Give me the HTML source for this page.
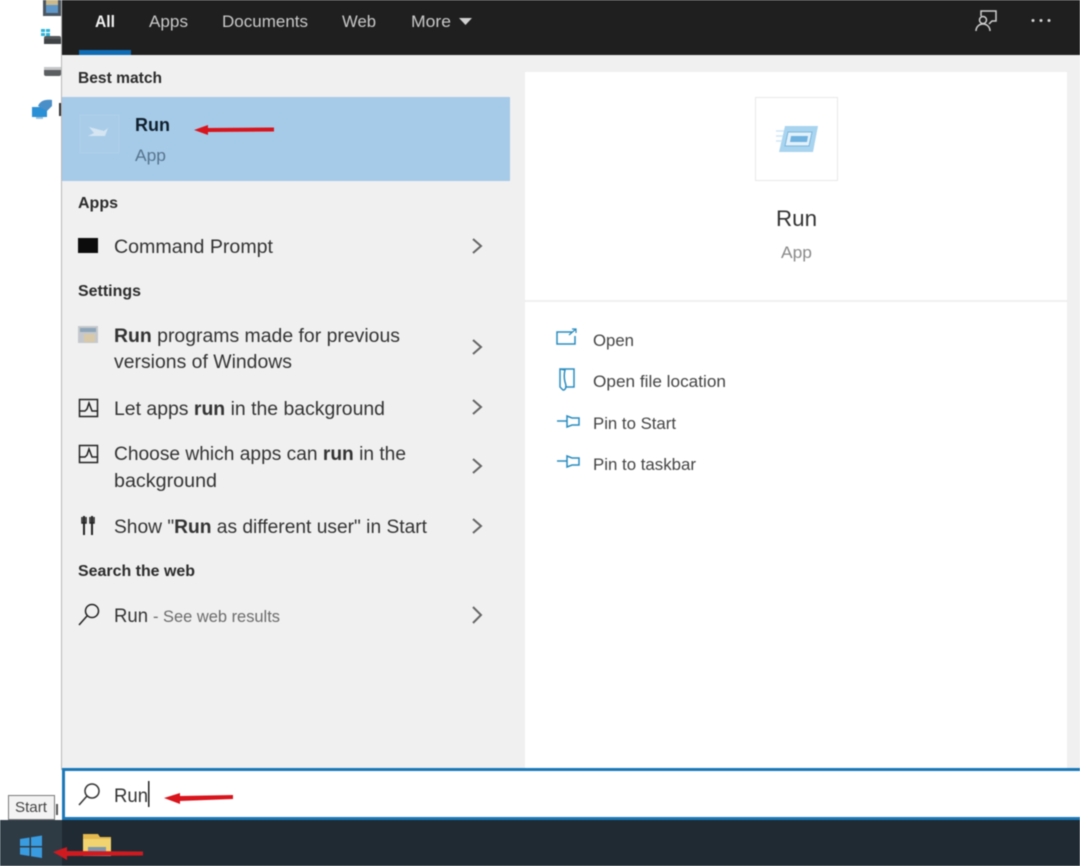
<!DOCTYPE html>
<html>
<head>
<meta charset="utf-8">
<title>Run search</title>
<style>
html,body{margin:0;padding:0;background:#fff;width:1080px;height:866px;overflow:hidden}
svg{display:block;position:absolute;left:0;top:0;filter:blur(.5px)}
text{font-family:"Liberation Sans",sans-serif;fill:#333;font-size:19px}
.h{font-weight:bold;font-size:16px;fill:#2b2b2b}
.t{font-size:17px;fill:#c9c9c9}
.a{font-size:16.5px;fill:#444}
</style>
</head>
<body>
<svg width="1080" height="866" viewBox="0 0 1080 866" xmlns="http://www.w3.org/2000/svg">
<rect width="1080" height="866" fill="#fff"/>

<!-- desktop icons -->
<rect x="43" y="0" width="18" height="16" fill="#4a5560"/>
<rect x="46" y="0" width="12" height="5" fill="#c9b98c"/>
<rect x="46" y="5" width="12" height="8" fill="#5f97c9"/>
<g fill="#2eb5d8"><rect x="41" y="29" width="4" height="3"/><rect x="46" y="29" width="4" height="3"/><rect x="41" y="33" width="4" height="3"/><rect x="46" y="33" width="4" height="3"/></g>
<rect x="44" y="36" width="17" height="8" rx="2" fill="#55595c"/>
<rect x="44" y="39" width="17" height="5" fill="#3f4346"/>
<rect x="44" y="67" width="17" height="9" rx="2" fill="#5c5f62"/>
<rect x="44" y="67" width="17" height="3" fill="#c4c6c8"/>
<path d="M32 107h15v10H32z" fill="#2b90d6"/>
<path d="M38 106c2-5 7-7 14-6l0 6-5 5z" fill="#4a8fc8"/>
<rect x="36" y="117" width="7" height="2" fill="#9fc3dd"/>
<rect x="59" y="103" width="3" height="13" fill="#333"/>

<!-- panel -->
<rect x="61" y="0" width="2" height="770" fill="#b8b8b8"/>
<rect x="62" y="55" width="1018" height="714" fill="#f0f0f0"/>
<rect x="525" y="72" width="542" height="697" fill="#fff"/>
<rect x="525" y="300" width="542" height="2" fill="#f0f0f0"/>

<!-- top bar -->
<rect x="62" y="0" width="1018" height="55" fill="#1f1f1f"/>
<rect x="79" y="50" width="52" height="5" fill="#0f6cb4"/>
<text x="95" y="27" textLength="20" lengthAdjust="spacingAndGlyphs" class="t" style="font-weight:bold;fill:#f2f2f2">All</text>
<text x="149" y="27" textLength="39" lengthAdjust="spacingAndGlyphs" class="t">Apps</text>
<text x="222" y="27" textLength="86" lengthAdjust="spacingAndGlyphs" class="t">Documents</text>
<text x="342" y="27" textLength="34" lengthAdjust="spacingAndGlyphs" class="t">Web</text>
<text x="411" y="27" textLength="40" lengthAdjust="spacingAndGlyphs" class="t">More</text>
<path d="M459 18h13l-6.500 7z" fill="#d0d0d0"/>
<!-- feedback icon -->
<g fill="none" stroke="#cfcfcf" stroke-width="1.500">
<path d="M981 16v-5h15v10h-4l-3 3"/>
<circle cx="983" cy="20" r="3.500"/>
<path d="M976 31c0-4 3-7 7-7s7 3 7 7"/>
</g>
<g fill="#d5d5d5"><circle cx="1033" cy="20.500" r="1.500"/><circle cx="1041" cy="20.500" r="1.500"/><circle cx="1049" cy="20.500" r="1.500"/></g>

<!-- left list -->
<text x="78" y="83" textLength="84" lengthAdjust="spacingAndGlyphs" class="h">Best match</text>
<rect x="62" y="97" width="448" height="84" fill="#a6cbe8"/>
<rect x="80" y="115" width="39" height="38" fill="#a9cde9" stroke="#afd0ea"/>
<path d="M89 127l15 4 4-3-3 8H88l6-3z" fill="#d5e5f2"/>
<text x="135" y="131" textLength="35" lengthAdjust="spacingAndGlyphs" style="font-weight:bold;font-size:18px;fill:#10202e">Run</text>
<text x="135" y="161" textLength="31" lengthAdjust="spacingAndGlyphs" style="font-size:17px;fill:#56748f">App</text>
<path d="M194 130l14-5v3l66-.5v4l-66 .5v3z" fill="#d9141c"/>

<text x="78" y="208" textLength="40" lengthAdjust="spacingAndGlyphs" class="h">Apps</text>
<rect x="78" y="238" width="20" height="15" fill="#0c0c0c"/>
<text x="114" y="253" textLength="159" lengthAdjust="spacingAndGlyphs">Command Prompt</text>

<text x="78" y="296" textLength="63" lengthAdjust="spacingAndGlyphs" class="h">Settings</text>
<rect x="78" y="326" width="20" height="17" fill="#c4c8cc"/>
<rect x="80" y="328" width="16" height="4" fill="#8ea4b8"/>
<rect x="84" y="334" width="11" height="8" fill="#d8c9a8"/>
<text x="114" y="342" textLength="286" lengthAdjust="spacingAndGlyphs"><tspan font-weight="bold">Run</tspan> programs made for previous</text>
<text x="114" y="368" textLength="178" lengthAdjust="spacingAndGlyphs">versions of Windows</text>

<g fill="none" stroke="#222" stroke-width="1.500">
<rect x="79.500" y="399.500" width="18" height="17"/>
<path d="M80 411h5l2-2 2-6 3 8h5"/>
<rect x="79.500" y="445.500" width="18" height="17"/>
<path d="M80 457h5l2-2 2-6 3 8h5"/>
<path d="M84 516v19M92 516v19" stroke-width="2"/>
<path d="M82 517v6h4v-6M90 517v6h4v-6" stroke-width="1.500"/>
<circle cx="92" cy="611" r="6.500"/>
<path d="M87 616l-8 9"/>
</g>
<text x="114" y="415" textLength="271" lengthAdjust="spacingAndGlyphs">Let apps <tspan font-weight="bold">run</tspan> in the background</text>
<text x="114" y="460" textLength="292" lengthAdjust="spacingAndGlyphs">Choose which apps can <tspan font-weight="bold">run</tspan> in the</text>
<text x="114" y="487" textLength="103" lengthAdjust="spacingAndGlyphs">background</text>
<text x="114" y="533" textLength="313" lengthAdjust="spacingAndGlyphs">Show "<tspan font-weight="bold">Run</tspan> as different user" in Start</text>
<text x="78" y="576" textLength="117" lengthAdjust="spacingAndGlyphs" class="h">Search the web</text>
<text x="114" y="622" textLength="34" lengthAdjust="spacingAndGlyphs">Run</text>
<text x="153" y="622" textLength="127" lengthAdjust="spacingAndGlyphs" style="font-size:16.500px;fill:#6b6b6b">- See web results</text>

<g fill="none" stroke="#666" stroke-width="2">
<path d="M473 239l8 7-8 7"/>
<path d="M473 340l8 7-8 7"/>
<path d="M473 400l8 7-8 7"/>
<path d="M473 459l8 7-8 7"/>
<path d="M473 519l8 7-8 7"/>
<path d="M473 607l8 8-8 8"/>
</g>

<!-- right preview -->
<rect x="755.500" y="97.500" width="82" height="83" fill="#fff" stroke="#e8e8e8"/>
<path d="M785 126h33l-5 26h-34z" fill="#a9d4ef"/>
<path d="M788 132h24l-3 14h-24z" fill="#e3f1fa" stroke="#79b6e0"/>
<path d="M791 136h17l-1 6h-17z" fill="#6fb2e0"/>
<g stroke="#cfe6f6" stroke-width="1.500"><path d="M776 131h8M776 136h7M776 141h6"/></g>
<text x="776" y="226" textLength="41" lengthAdjust="spacingAndGlyphs" style="font-size:22px;fill:#333">Run</text>
<text x="781" y="258" textLength="31" lengthAdjust="spacingAndGlyphs" style="font-size:17px;fill:#8a8a8a">App</text>

<g fill="none" stroke="#2b8dbf" stroke-width="1.500">
<path d="M572 332h-15v12h18v-8"/>
<path d="M569 335l7-6M572 329h4v4" stroke-width="1.200"/>
<path d="M560 369v18l3 3h1c3-2 2-5 1-8-1-4-1-8 0-12zM560 369h14v18h-9"/>
<path d="M557 421h10M567 416l5 2h7v7h-7l-5 2z"/>
<path d="M557 461h10M567 456l5 2h7v7h-7l-5 2z"/>
</g>
<text x="593" y="346" textLength="41" lengthAdjust="spacingAndGlyphs" class="a">Open</text>
<text x="593" y="387" textLength="133" lengthAdjust="spacingAndGlyphs" class="a">Open file location</text>
<text x="593" y="429" textLength="83" lengthAdjust="spacingAndGlyphs" class="a">Pin to Start</text>
<text x="593" y="470" textLength="103" lengthAdjust="spacingAndGlyphs" class="a">Pin to taskbar</text>

<!-- taskbar -->
<rect x="0" y="820" width="1080" height="46" fill="#1f2a33"/>
<rect x="0" y="820" width="62" height="46" fill="#2e3b45"/>
<path d="M20 839l9.500-1.500V846H20zM31 837.200l11-1.700V846H31zM20 847.500h9.500V856L20 854.500zM31 847.500h11V858l-11-1.700z" fill="#3a9ce0"/>
<path d="M83 834h15l2 3h11v10H83z" fill="#e6b94e"/>
<rect x="83" y="839" width="28" height="17" fill="#f1d36f"/>
<rect x="88" y="847" width="18" height="8" fill="#7d98ad"/>
<rect x="83" y="854" width="28" height="2" fill="#f5f0e0"/>
<path d="M53 852l14-5v4l76 .5v4l-76 .5v4z" fill="#cf1a20"/>

<!-- tooltip -->
<rect x="8.500" y="795.500" width="46" height="24" fill="#f3f3f3" stroke="#7a7a7a"/>
<text x="15" y="812" textLength="32" lengthAdjust="spacingAndGlyphs" style="font-size:15px;fill:#444">Start</text>
<rect x="55" y="802" width="7" height="17" fill="#fff"/>
<rect x="56" y="804" width="2" height="11" fill="#555"/>

<!-- search box -->
<rect x="63.500" y="769.500" width="1020" height="49" fill="#fff" stroke="#1a78b8" stroke-width="3"/>
<g fill="none" stroke="#333" stroke-width="1.500">
<circle cx="92" cy="791" r="7"/>
<path d="M87 796l-8 9"/>
</g>
<text x="114" y="802" textLength="34" lengthAdjust="spacingAndGlyphs">Run</text>
<rect x="148" y="781" width="1.500" height="26" fill="#222"/>
<path d="M164 798l16-5v3l53-1v4l-53 2v3z" fill="#d9141c"/>
</svg>
</body>
</html>
